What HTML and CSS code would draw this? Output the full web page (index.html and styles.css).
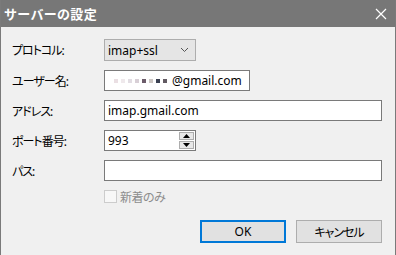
FILE: index.html
```html
<!DOCTYPE html>
<html lang="ja">
<head>
  <meta charset="UTF-8" />
  <title>サーバーの設定</title>
  <link rel="stylesheet" href="styles.css">
</head>
<body>

  <div class="dialog">
    <!-- Title bar -->
    <div class="titlebar">
      <span class="title">サーバーの設定</span>
      <span class="close">
        <svg width="12" height="12" viewBox="0 0 12 12"><path d="M1 1L11 11M11 1L1 11" stroke="#fff" stroke-width="1.2" fill="none"/></svg>
      </span>
    </div>

    <div class="content">
      <div class="form">
        <label class="jp">プロトコル:</label>
        <div class="select">
          <span>imap+ssl</span>
          <svg width="9" height="6" viewBox="0 0 9 6"><path d="M1 1L4.5 4.5L8 1" stroke="#555" stroke-width="1" fill="none"/></svg>
        </div>

        <label class="jp">ユーザー名:</label>
        <div class="field user">
          <span class="blur">
            <i style="background:#eadfe3"></i><i style="background:#efe9ec"></i><i style="background:#e2dde3"></i><i style="background:#d8cfd6"></i><i style="background:#6c5c6a"></i><i style="background:#cdc7c4"></i><i style="background:#3b4152"></i><i style="background:#625a62"></i>
          </span><span>@gmail.com</span>
        </div>

        <label class="jp">アドレス:</label>
        <div class="field wide">imap.gmail.com</div>

        <label class="jp">ポート番号:</label>
        <div class="field port">
          <span>993</span>
          <div class="spin">
            <div class="spin-btn"><svg width="7" height="4" viewBox="0 0 7 4"><path d="M0 4L3.5 0L7 4Z" fill="#000"/></svg></div>
            <div class="spin-btn"><svg width="7" height="4" viewBox="0 0 7 4"><path d="M0 0L3.5 4L7 0Z" fill="#000"/></svg></div>
          </div>
        </div>

        <label class="jp">パス:</label>
        <div class="field wide"></div>
      </div>

      <div class="check-row">
        <span class="checkbox"></span>
        <span class="jp check-label">新着のみ</span>
      </div>

      <div class="buttons">
        <button class="btn default">OK</button>
        <button class="btn jp">キャンセル</button>
      </div>
    </div>
  </div>

</body>
</html>
```

FILE: styles.css
```css
* {
  box-sizing: border-box;
}
body {
  margin: 0;
  font-family: 'Noto Sans', 'Noto Sans CJK JP', sans-serif;
  font-size: 12px;
  color: #000;
  background: #f0f0f0;
}
.jp {
  font-feature-settings: "palt";
}
.dialog {
  width: 396px;
  height: 255px;
  background: #f0f0f0;
  border-left: 1px solid #7a7a7a;
  border-right: 1px solid #7a7a7a;
}
/* Title bar */
.titlebar {
  height: 27px;
  background: #777777;
  display: flex;
  align-items: center;
  justify-content: space-between;
  padding: 0 8px 0 3px;
}
.title {
  color: #fff;
  font-size: 13px;
  font-weight: bold;
  font-family: 'Noto Sans CJK JP', sans-serif;
  letter-spacing: 0.3px;
}
.close {
  display: flex;
  width: 12px;
  height: 12px;
}
.content {
  padding: 12px 13px 0 11px;
}
.form {
  display: grid;
  grid-template-columns: 92px 1fr;
  row-gap: 9px;
  align-items: center;
}
.form label {
  font-size: 12px;
  letter-spacing: -1px;
}
/* Inputs */
.field {
  height: 21px;
  background: #fff;
  border: 1px solid #7a7a7a;
  display: flex;
  align-items: center;
  padding: 0 3px;
  white-space: nowrap;
  overflow: hidden;
}
.user {
  width: 146px;
}
.wide {
  width: 100%;
}
.port {
  width: 92px;
  justify-content: space-between;
  padding-right: 1px;
}
.blur {
  display: inline-flex;
  flex-shrink: 0;
  margin: 0 2px 0 6px;
}
.blur i {
  display: inline-block;
  width: 4px;
  height: 4px;
  margin-right: 3px;
}
.select {
  width: 92px;
  height: 22px;
  background: #e5e5e5;
  border: 1px solid #adadad;
  display: flex;
  align-items: center;
  justify-content: space-between;
  padding: 0 6px 0 3px;
}
.spin {
  display: flex;
  flex-direction: column;
  gap: 1px;
}
.spin-btn {
  width: 15px;
  height: 8px;
  background: #e8e8e8;
  border: 1px solid #adadad;
  display: flex;
  align-items: center;
  justify-content: center;
}
/* Checkbox */
.check-row {
  margin: 9px 0 0 92px;
  display: flex;
  align-items: center;
  height: 13px;
}
.checkbox {
  width: 13px;
  height: 13px;
  border: 1px solid #cccccc;
  background: #f7f7f7;
  margin-right: 3px;
}
.check-label {
  color: #8d8d8d;
  font-size: 12px;
  letter-spacing: -0.5px;
}
/* Buttons */
.buttons {
  margin-top: 17px;
  display: flex;
  justify-content: flex-end;
  gap: 10px;
}
.btn {
  width: 86px;
  height: 23px;
  background: #e1e1e1;
  border: 1px solid #adadad;
  font-family: 'Noto Sans', 'Noto Sans CJK JP', sans-serif;
  font-size: 12px;
  color: #000;
  padding: 0;
}
.btn.jp {
  letter-spacing: -1px;
}
.btn.default {
  border: 2px solid #0078d7;
}
```
